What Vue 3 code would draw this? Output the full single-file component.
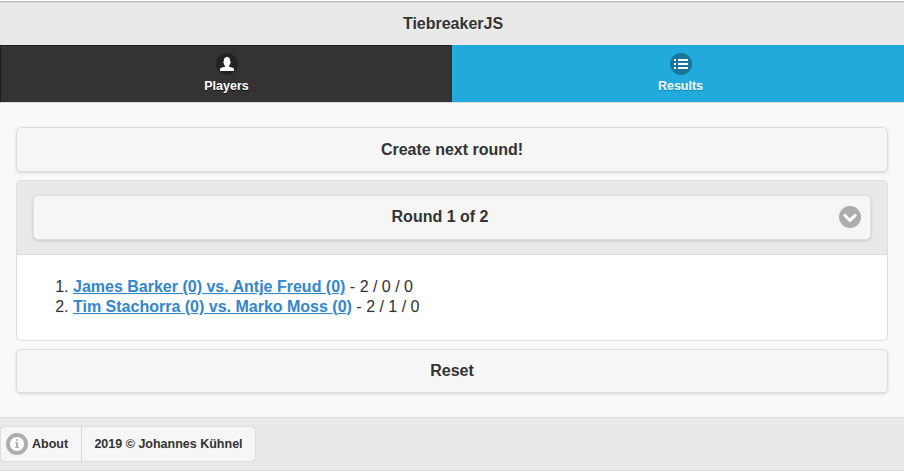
<script setup>
const matches = [
  { pair: 'James Barker (0) vs. Antje Freud (0)', score: '2 / 0 / 0' },
  { pair: 'Tim Stachorra (0) vs. Marko Moss (0)', score: '2 / 1 / 0' },
]
</script>

<template>
  <div class="page">
    <header class="header">
      <h1>TiebreakerJS</h1>
    </header>
    <nav class="navbar">
      <a class="tab dark">
        <span class="disc"><svg viewBox="0 0 14 14"><path d="M9,9.6V8.8C9.7,8.2,10,7.4,10.1,6.6C10.6,6.3,10.7,5.9,10.7,5.3C10.7,4.8,10.5,4.5,10.2,4.3C10.2,1.5,9,0,7,0S3.8,1.5,3.8,4.3C3.5,4.5,3.3,4.8,3.3,5.3C3.3,5.9,3.4,6.3,3.9,6.6C4,7.4,4.3,8.2,5,8.8V9.6C4.2,10.3,0,10.7,0,12V14H14V12C14,10.7,9.8,10.3,9,9.6z" /></svg></span>
        <span>Players</span>
      </a>
      <a class="tab active">
        <span class="disc"><svg viewBox="0 0 14 14"><path d="M0,4h2V2H0V4z M4,2v2h10V2H4z M0,8h2V6H0V8z M4,8h10V6H4V8z M0,12h2v-2H0V12z M4,12h10v-2H4V12z" /></svg></span>
        <span>Results</span>
      </a>
    </nav>
    <main class="content">
      <button class="btn create">Create next round!</button>
      <section class="round">
        <div class="round-head">
          <button class="btn select">
            <span class="label">Round 1 of 2</span>
            <span class="disc"><svg viewBox="0 0 14 14"><path d="M11.949,3.404L7,8.354L2.05,3.404L-0.071,5.525L7,12.597L14.07,5.525z" /></svg></span>
          </button>
        </div>
        <ol class="matches">
          <li v-for="m in matches" :key="m.pair"><a>{{ m.pair }}</a> - {{ m.score }}</li>
        </ol>
      </section>
      <button class="btn reset">Reset</button>
    </main>
    <footer class="footer">
      <a class="foot about">
        <span class="disc"><svg viewBox="0 0 14 14"><path fill-rule="evenodd" d="M7,0C3.134,0,0,3.134,0,7s3.134,7,7,7s7-3.134,7-7S10.866,0,7,0z M7,2c0.552,0,1,0.447,1,1S7.552,4,7,4S6,3.553,6,3S6.448,2,7,2z M9,11H5v-1h1V6H5V5h3v5h1V11z" /></svg></span>
        <span>About</span>
      </a>
      <a class="foot copy">2019 © Johannes Kühnel</a>
    </footer>
  </div>
</template>

<style>
body {
  background: #fff;
  overflow: hidden;
}
</style>

<style scoped>
.page,
.page * {
  box-sizing: border-box;
}
.page {
  height: 472px;
  padding-top: 1px;
  display: flex;
  flex-direction: column;
  font-family: "Liberation Sans", Arial, sans-serif;
  font-size: 16px;
  line-height: 20px;
  color: #333;
  text-shadow: 0 1px 0 #f3f3f3;
}
.header {
  height: 44px;
  border-top: 1px solid #b3b8b5;
  box-shadow: inset 0 1px 0 #ddd;
  background: #e9e9e9;
  text-align: center;
}
h1 {
  margin: 0;
  padding: 12px 0 0 2px;
  font-size: 16px;
  line-height: 20px;
}
.navbar {
  display: grid;
  grid-template-columns: 1fr 1fr;
  height: 58px;
  border-bottom: 1px solid #ddd;
}
.tab {
  display: flex;
  flex-direction: column;
  align-items: center;
  padding-top: 7px;
  border: 1px solid;
  border-width: 1px 0 0 1px;
  color: #fff;
  font-size: 12.5px;
  font-weight: bold;
  line-height: 16px;
}
.tab .disc {
  margin-bottom: 3px;
}
.dark {
  background: #333;
  border-color: #1f1f1f;
  text-shadow: 0 1px 0 #111;
}
.active {
  padding-left: 4px;
  background: #22aadd;
  border-color: #22aadd;
  text-shadow: 0 1px 0 #0088bb;
}
.disc {
  flex: none;
  display: flex;
  align-items: center;
  justify-content: center;
  width: 22px;
  height: 22px;
  border-radius: 50%;
  background: rgba(0, 0, 0, 0.3);
}
.disc svg {
  width: 14px;
  height: 14px;
  fill: #fff;
}
.content {
  height: 314px;
  padding: 24px 16px 0;
  background: #f9f9f9;
}
.btn {
  display: flex;
  align-items: center;
  justify-content: center;
  width: 100%;
  height: 45px;
  margin: 0;
  padding: 0;
  border: 1px solid #ddd;
  border-radius: 5px;
  background: #f6f6f6;
  box-shadow: 0 1px 3px rgba(0, 0, 0, 0.15);
  color: #333;
  font: bold 16px/20px "Liberation Sans", Arial, sans-serif;
  text-shadow: inherit;
}
.round {
  height: 161px;
  margin: 8px 0;
  border: 1px solid #ddd;
  border-radius: 5px;
  background: #fff;
  overflow: hidden;
}
.round-head {
  height: 74px;
  padding: 14px 16px 0;
  border-bottom: 1px solid #ddd;
  background: #e9e9e9;
}
.select {
  padding: 0 9px 1px;
}
.label {
  flex: 1;
  padding-right: 2px;
  margin-top: -1px;
}
.select .disc {
  background: #adadad;
}
.matches {
  margin: 0;
  padding: 22px 0 0 56px;
}
.matches a {
  color: #3388cc;
  font-weight: bold;
  text-decoration: underline;
}
.reset {
  height: 44px;
}
.footer {
  display: flex;
  height: 54px;
  padding-top: 8px;
  border: 1px solid #ddd;
  border-width: 1px 0;
  background: #e9e9e9;
}
.foot {
  display: flex;
  align-items: center;
  height: 36px;
  border: 1px solid #ddd;
  background: #f6f6f6;
  font-size: 12.5px;
  font-weight: bold;
}
.about {
  width: 81px;
  padding-left: 5px;
  gap: 4px;
  border-right: 0;
  border-radius: 5px 0 0 5px;
}
.about .disc {
  background: #adadad;
}
.copy {
  width: 175px;
  justify-content: center;
  border-radius: 0 5px 5px 0;
}
</style>
